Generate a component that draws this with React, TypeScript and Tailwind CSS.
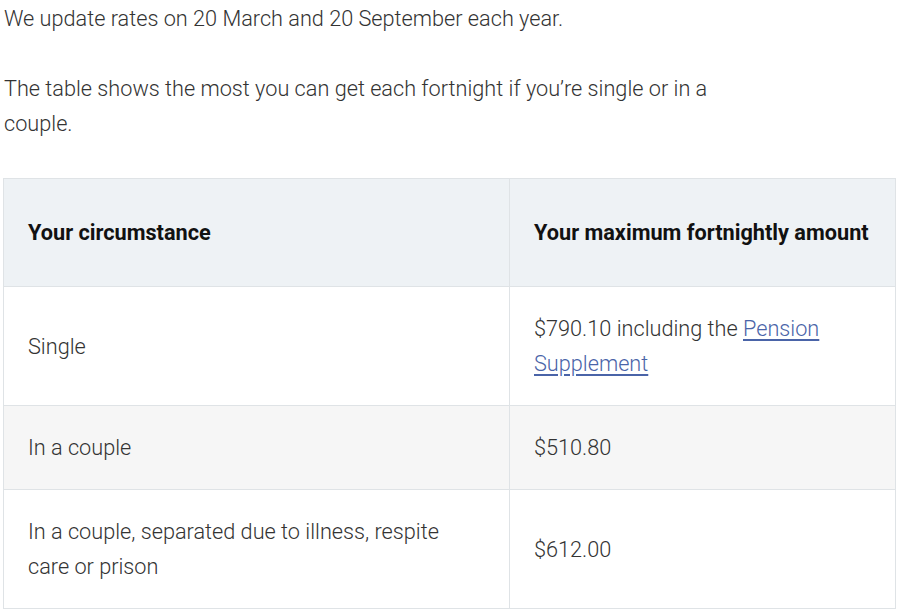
const rows = [
    { circumstance: "Single", amount: null },
    { circumstance: "In a couple", amount: "$510.80" },
    { circumstance: "In a couple, separated due to illness, respite care or prison", amount: "$612.00" },
];

export default function App() {
    return (
        <div className="bg-white min-h-screen text-[21.7px] leading-[35px] font-light text-[#333333]" style={{ fontFamily: "Roboto, 'Liberation Sans', sans-serif" }}>
            <div className="pl-[4px] pt-[1px]">
                <p>We update rates on 20 March and 20 September each year.</p>
                <p className="mt-[35px] max-w-[730px]">
                    The table shows the most you can get each fortnight if you’re single or in a couple.
                </p>
            </div>

            <table className="mt-[37px] ml-[3px] w-[893px] border-collapse border border-[#dfe3e6]">
                <thead>
                    <tr className="bg-[#eef2f5]">
                        <th className="w-[506px] border border-[#dfe3e6] px-[24px] py-[36px] text-left font-bold text-[#111111]">
                            Your circumstance
                        </th>
                        <th className="border border-[#dfe3e6] px-[24px] py-[36px] text-left font-bold text-[#111111]">
                            Your maximum fortnightly amount
                        </th>
                    </tr>
                </thead>
                <tbody>
                    {rows.map((row, i) => (
                        <tr key={i} className={i === 1 ? "bg-[#f6f6f6]" : "bg-white"}>
                            <td className="border border-[#dfe3e6] px-[24px] py-[24px] align-middle">
                                <div className="max-w-[440px]">{row.circumstance}</div>
                            </td>
                            <td className="border border-[#dfe3e6] px-[24px] py-[24px] align-middle">
                                {row.amount ?? (
                                    <>
                                        $790.10 including the{" "}
                                        <a href="#" className="text-[#4a64a8] underline decoration-[#4a64a8] underline-offset-[3px]">
                                            Pension Supplement
                                        </a>
                                    </>
                                )}
                            </td>
                        </tr>
                    ))}
                </tbody>
            </table>
        </div>
    )
}
